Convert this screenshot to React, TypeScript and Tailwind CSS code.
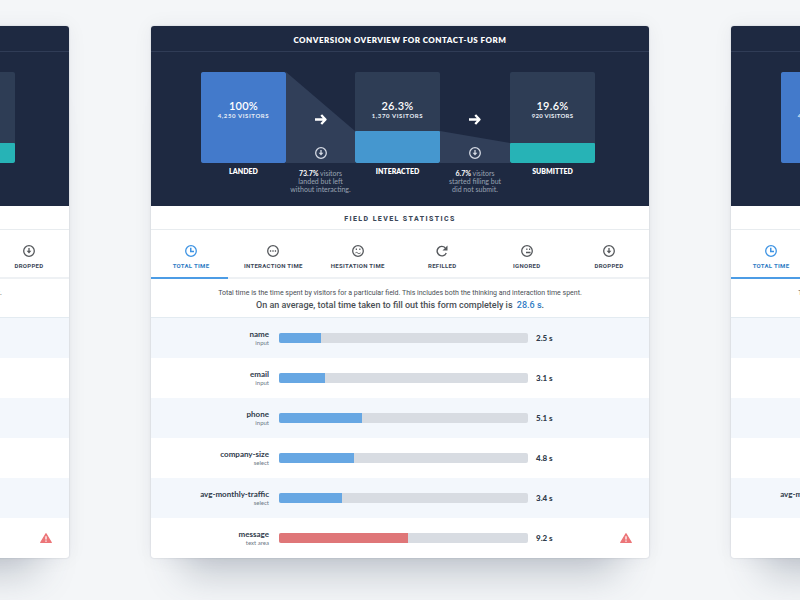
import type { ReactNode } from "react";

type Field = { name: string; kind: string; time: string; share: number; alert?: boolean };

const FIELDS: Field[] = [
  { name: "name", kind: "input", time: "2.5 s", share: 17 },
  { name: "email", kind: "input", time: "3.1 s", share: 18.5 },
  { name: "phone", kind: "input", time: "5.1 s", share: 33.5 },
  { name: "company-size", kind: "select", time: "4.8 s", share: 30 },
  { name: "avg-monthly-traffic", kind: "select", time: "3.4 s", share: 25.4 },
  { name: "message", kind: "text area", time: "9.2 s", share: 52, alert: true },
];

function RingIcon({ children }: { children?: ReactNode }) {
  return (
    <svg viewBox="0 0 24 24" className="size-3" fill="none" stroke="currentColor" strokeWidth="2.6" aria-hidden="true">
      <circle cx="12" cy="12" r="10.6" />
      {children}
    </svg>
  );
}

const ClockIcon = () => (
  <RingIcon>
    <path d="M11.5 5.5v7.5h6.5" strokeWidth="3" />
  </RingIcon>
);

const DotsIcon = () => (
  <RingIcon>
    <path d="M5.8 12h2.6M10.7 12h2.6M15.6 12h2.6" />
  </RingIcon>
);

const UnsureFaceIcon = () => (
  <RingIcon>
    <path d="M7.5 8.5h2.4M14.5 8.5h2.4" strokeWidth="2.6" />
    <path d="M7 15.5c1.800-1 3-.8 4.500.6s3.200 1.400 5.500-.2" strokeWidth="2" />
  </RingIcon>
);

const SideFaceIcon = () => (
  <RingIcon>
    <path d="M10.5 8.5h2.4M16 8.5h2.4" strokeWidth="2.6" />
    <path d="M10 15h9" strokeWidth="2.6" />
  </RingIcon>
);

const DownIcon = () => (
  <RingIcon>
    <path d="M12 6v6.5" />
    <path d="M7.200 11.5h9.600L12 17z" fill="currentColor" stroke="none" />
  </RingIcon>
);

const ReloadIcon = () => (
  <svg viewBox="0 0 24 24" className="size-3" fill="none" stroke="currentColor" strokeWidth="2.8" aria-hidden="true">
    <path d="M20.5 16A9.5 9.5 0 1 1 18.5 5.5" />
    <path d="M23 1v10H13z" fill="currentColor" stroke="none" />
  </svg>
);

const WarningIcon = () => (
  <svg viewBox="0 0 24 20" className="h-[10px] w-3" role="img" aria-label="Needs attention">
    <path d="M12 1.5L22.5 19h-21z" fill="#ec7578" stroke="#ec7578" strokeWidth="2.6" strokeLinejoin="round" />
    <path d="M12 6.5v6.5M12 14.8v2.6" stroke="#fff" strokeWidth="2.6" />
  </svg>
);

const ArrowIcon = () => (
  <svg viewBox="0 0 24 22" className="h-[11px] w-3" fill="none" stroke="#fff" strokeWidth="4.6" aria-hidden="true">
    <path d="M0 11h20M12.5 2l8.5 9-8.5 9" strokeLinejoin="round" />
  </svg>
);

const TABS = [
  { label: "TOTAL TIME", icon: <ClockIcon /> },
  { label: "INTERACTION TIME", icon: <DotsIcon /> },
  { label: "HESITATION TIME", icon: <UnsureFaceIcon /> },
  { label: "REFILLED", icon: <ReloadIcon /> },
  { label: "IGNORED", icon: <SideFaceIcon /> },
  { label: "DROPPED", icon: <DownIcon /> },
];

type StageProps = { percent: string; visitors: string; label: string; fill: string; tracking?: string };

function Stage({ percent, visitors, label, fill, tracking = "tracking-widest" }: StageProps) {
  return (
    <div className="text-center text-white">
      <div className="relative h-[91px] overflow-hidden rounded-[2px] bg-[#2e3d55] pt-7">
        <div className={`absolute inset-x-0 bottom-0 rounded-[1px] ${fill}`} />
        <div className="relative text-[11px] leading-3 font-semibold tracking-wide">{percent}</div>
        <div className={`relative text-[6px] leading-2 font-bold text-[#e8edf5] ${tracking}`}>{visitors}</div>
      </div>
      <div className="mt-1 text-[7px] leading-2 font-extrabold">{label}</div>
    </div>
  );
}

function Drop({ percent, lines, shape }: { percent: string; lines: string[]; shape: string }) {
  return (
    <div className="text-center">
      <div className="relative flex h-[91px] flex-col items-center justify-end pb-1">
        <svg viewBox="0 0 70 91" preserveAspectRatio="none" className="absolute inset-0 size-full" aria-hidden="true">
          <polygon points={shape} fill="#313f59" />
        </svg>
        <div className="relative flex flex-col items-center gap-[22px] text-[#d5dae4]">
          <ArrowIcon />
          <DownIcon />
        </div>
      </div>
      <p className="mt-[6px] text-[7px] leading-2 whitespace-nowrap text-[#99a3b2]">
        <strong className="font-bold text-white">{percent}</strong> visitors
        {lines.map((line) => (
          <span key={line} className="block">{line}</span>
        ))}
      </p>
    </div>
  );
}

function FieldRow({ field }: { field: Field }) {
  return (
    <li className="flex h-10 items-center odd:bg-[#f3f7fc]">
      <div className="w-[118px] shrink-0 text-right">
        <div className="text-[8px] leading-[9px] font-bold text-[#2f3b4b]">{field.name}</div>
        <div className="text-[6px] leading-2 text-[#6d7785]">{field.kind}</div>
      </div>
      <div
        role="progressbar"
        aria-label={field.name}
        aria-valuenow={field.share}
        className="ml-[10px] h-[10px] w-[249px] shrink-0 overflow-hidden rounded-[2px] bg-[#d8dce2]"
      >
        <div className={`h-full ${field.alert ? "bg-[#df7678]" : "bg-[#67a7e3]"}`} style={{ width: `${field.share}%` }} />
      </div>
      <div className="ml-2 text-[8px] font-black text-[#2f3b4b]">{field.time}</div>
      {field.alert && (
        <div className="mr-[17px] ml-auto">
          <WarningIcon />
        </div>
      )}
    </li>
  );
}

function ReportCard() {
  return (
    <article className="w-[498px] shrink-0 overflow-hidden rounded-[3px] bg-white font-['Lato',sans-serif] shadow-[0_0_2px_rgba(30,41,65,0.2),0_0_20px_rgba(30,41,65,0.06),0_48px_36px_-32px_rgba(66,80,100,0.28)]">
      <header className="bg-[#1e2941] pb-[13px]">
        <h1 className="border-b border-[#303c56] pt-[9px] pb-[5px] text-center text-[8px] leading-[11px] font-extrabold tracking-[0.06em] text-white">
          CONVERSION OVERVIEW FOR CONTACT-US FORM
        </h1>
        <div className="mt-5 ml-[50px] grid grid-cols-[85px_69px_85px_70px_85px]">
          <Stage percent="100%" visitors="4,250 VISITORS" label="LANDED" fill="h-full bg-[#437acb]" />
          <Drop percent="73.7%" lines={["landed but left", "without interacting."]} shape="0,0 70,59 70,91 0,91" />
          <Stage percent="26.3%" visitors="1,370 VISITORS" label="INTERACTED" fill="h-8 bg-[#4597cf]" />
          <Drop percent="6.7%" lines={["started filling but", "did not submit."]} shape="0,59 70,71 70,91 0,91" />
          <Stage percent="19.6%" visitors="920 VISITORS" label="SUBMITTED" fill="h-5 bg-[#27b3b6]" tracking="tracking-wider" />
        </div>
      </header>

      <section className="font-['Roboto',sans-serif] text-[#3c4858]">
        <h2 className="border-b border-[#e8ecef] pt-2 pb-1 text-center text-[7px] leading-[11px] font-extrabold tracking-[0.2em]">
          FIELD LEVEL STATISTICS
        </h2>
        <div role="tablist" className="relative grid grid-cols-[80px_repeat(4,1fr)_80px] border-b-2 border-[#eef1f4]">
          {TABS.map((tab, i) => (
            <button
              key={tab.label}
              type="button"
              role="tab"
              aria-selected={i === 0}
              className={`flex h-[47px] flex-col items-center gap-1 pt-[15px] text-[6px] leading-[10px] font-bold tracking-wider whitespace-nowrap ${i === 0 ? "text-[#3d93e3]" : "text-[#55585c]"}`}
            >
              {tab.icon}
              <span className={i === 0 ? "text-[#2f7cc4]" : "text-[#3c4858]"}>{tab.label}</span>
            </button>
          ))}
          <div className="absolute -bottom-[2px] left-0 h-[2px] w-[77px] bg-[#4c9ce5]" />
        </div>
        <div className="border-b border-[#e3ebf1] pt-[9px] pb-[5px] text-center whitespace-nowrap">
          <p className="text-[7px] leading-[11px] text-[#4a4f55]">
            Total time is the time spent by visitors for a particular field. This includes both the thinking and interaction time spent.
          </p>
          <p className="text-[9px] leading-[13px] font-medium text-[#4a4f55]">
            On an average, total time taken to fill out this form completely is{" "}
            <strong className="ml-[2px] font-medium text-[#2f7cc4]">28.6 s</strong>.
          </p>
        </div>
      </section>

      <ul>
        {FIELDS.map((field) => (
          <FieldRow key={field.name} field={field} />
        ))}
      </ul>
    </article>
  );
}

export default function App() {
  return (
    <main className="flex min-h-screen items-start justify-center gap-[82px] overflow-hidden bg-[#f4f6f8] pt-[26px]">
      <ReportCard />
      <ReportCard />
      <ReportCard />
    </main>
  );
}
